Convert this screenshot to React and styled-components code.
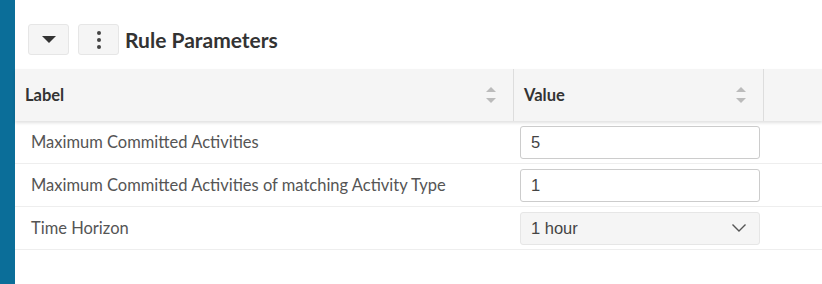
import React from "react";
import styled, { createGlobalStyle } from "styled-components";

const GlobalStyle = createGlobalStyle`
  html, body {
    margin: 0;
    padding: 0;
    background: #fff;
  }
  body {
    font-family: Lato, "Liberation Sans", sans-serif;
    color: #333;
  }
`;

const rows = [
  { label: "Maximum Committed Activities", value: "5" },
  { label: "Maximum Committed Activities of matching Activity Type", value: "1" },
  { label: "Time Horizon", value: "1 hour", select: true },
];

export default function App() {
  return (
    <>
      <GlobalStyle />
      <Page>
        <SideBar />
        <Main>
          <TitleBar>
            <IconButton>
              <svg width="14" height="8" viewBox="0 0 14 8">
                <path d="M0 0 L14 0 L7 7 Z" fill="#333" />
              </svg>
            </IconButton>
            <IconButton>
              <svg width="6" height="20" viewBox="0 0 6 20">
                <circle cx="3" cy="3" r="2" fill="#444" />
                <circle cx="3" cy="10" r="2" fill="#444" />
                <circle cx="3" cy="17" r="2" fill="#444" />
              </svg>
            </IconButton>
            <Title>Rule Parameters</Title>
          </TitleBar>
          <Table>
            <HeadRow>
              <HeadCell>
                Label
                <SortIcon />
              </HeadCell>
              <HeadCell>
                Value
                <SortIcon />
              </HeadCell>
              <HeadCell $last />
            </HeadRow>
            {rows.map((row) => (
              <Row key={row.label}>
                <LabelCell>{row.label}</LabelCell>
                <ValueCell>
                  {row.select ? (
                    <SelectBox>
                      {row.value}
                      <svg width="16" height="10" viewBox="0 0 16 10">
                        <path
                          d="M1.5 1.5 L8 8 L14.5 1.5"
                          fill="none"
                          stroke="#555"
                          strokeWidth="1.4"
                        />
                      </svg>
                    </SelectBox>
                  ) : (
                    <TextInput readOnly value={row.value} />
                  )}
                </ValueCell>
                <div />
              </Row>
            ))}
          </Table>
        </Main>
      </Page>
    </>
  );
}

function SortIcon() {
  return (
    <SortWrap>
      <svg width="12" height="22" viewBox="0 0 12 22">
        <path d="M1 8 L6 3 L11 8 Z" fill="#bbb" />
        <path d="M1 14 L6 19 L11 14 Z" fill="#bbb" />
      </svg>
    </SortWrap>
  );
}

const Page = styled.div`
  display: flex;
  height: 284px;
  width: 822px;
`;

const SideBar = styled.div`
  width: 15px;
  background: #0b6e99;
  flex-shrink: 0;
`;

const Main = styled.div`
  flex: 1;
  display: flex;
  flex-direction: column;
`;

const TitleBar = styled.div`
  display: flex;
  align-items: center;
  gap: 9px;
  padding: 24px 0 0 13px;
  height: 31px;
`;

const IconButton = styled.div`
  width: 41px;
  height: 31px;
  box-sizing: border-box;
  border: 1px solid #e6e6e6;
  border-radius: 3px;
  background: #f5f5f5;
  display: flex;
  align-items: center;
  justify-content: center;
`;

const Title = styled.div`
  font-size: 21px;
  font-weight: 700;
  color: #333;
  margin-left: -3px;
`;

const Table = styled.div`
  margin-top: 14px;
  display: flex;
  flex-direction: column;
`;

const HeadRow = styled.div`
  display: grid;
  grid-template-columns: 499px 250px 1fr;
  height: 52px;
  background: #f5f5f5;
  box-shadow: 0 2px 3px rgba(0, 0, 0, 0.12);
  position: relative;
  z-index: 1;
`;

const HeadCell = styled.div`
  display: flex;
  align-items: center;
  justify-content: space-between;
  padding: 0 16px 0 10px;
  border-right: ${(p) => (p.$last ? "none" : "1px solid #ddd")};
  font-size: 16.5px;
  font-weight: 700;
  color: #333;
`;

const SortWrap = styled.div`
  display: flex;
  align-items: center;
`;

const Row = styled.div`
  display: grid;
  grid-template-columns: 499px 250px 1fr;
  height: 42px;
  border-bottom: 1px solid #eee;
  align-items: center;
`;

const LabelCell = styled.div`
  padding-left: 16px;
  font-size: 16.5px;
  color: #555;
`;

const ValueCell = styled.div`
  padding-left: 6px;
`;

const TextInput = styled.input`
  box-sizing: border-box;
  width: 240px;
  height: 33px;
  border: 1px solid #ccc;
  border-radius: 3px;
  padding: 0 10px;
  font-family: "Liberation Sans", Arial, sans-serif;
  font-size: 16.5px;
  color: #444;
  outline: none;
`;

const SelectBox = styled.div`
  box-sizing: border-box;
  width: 240px;
  height: 33px;
  border: 1px solid #e6e6e6;
  border-radius: 3px;
  background: #f5f5f5;
  padding: 0 12px 0 10px;
  display: flex;
  align-items: center;
  justify-content: space-between;
  font-family: "Liberation Sans", Arial, sans-serif;
  font-size: 16.5px;
  color: #444;
`;
